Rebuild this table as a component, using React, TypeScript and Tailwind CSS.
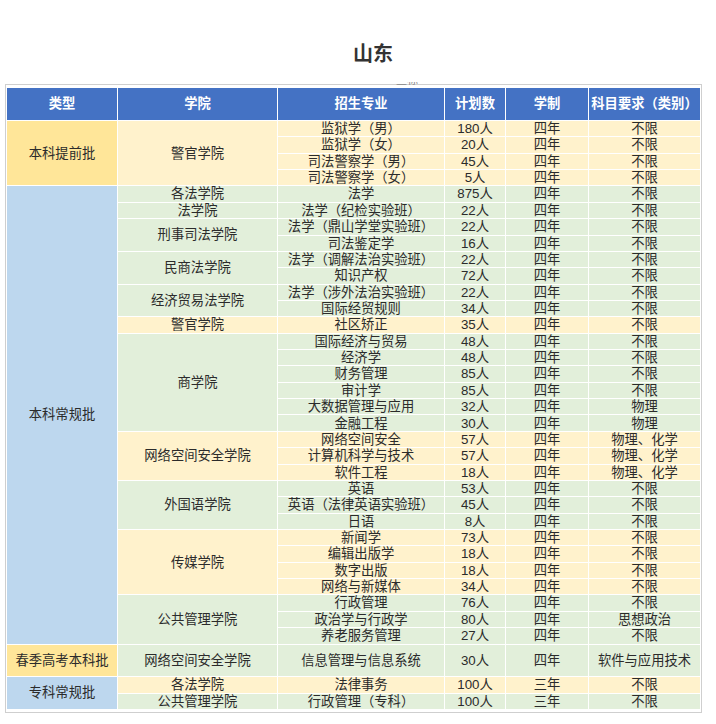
type Span = [string, number, string];

interface Row {
  type?: Span;
  college?: Span;
  major: string;
  plan: string;
  years?: string;
  subject?: string;
  bg: string;
  tall?: boolean;
}

const GOLD = "bg-[#FFE699]";
const YEL = "bg-[#FFF2CC]";
const BLUE = "bg-[#BDD7EE]";
const GRN = "bg-[#E2EFDA]";

const rows: Row[] = [
  { type: ["本科提前批", 4, GOLD], college: ["警官学院", 4, YEL], major: "监狱学（男）", plan: "180人", bg: YEL },
  { major: "监狱学（女）", plan: "20人", bg: YEL },
  { major: "司法警察学（男）", plan: "45人", bg: YEL },
  { major: "司法警察学（女）", plan: "5人", bg: YEL },

  { type: ["本科常规批", 28, BLUE], college: ["各法学院", 1, GRN], major: "法学", plan: "875人", bg: GRN },
  { college: ["法学院", 1, GRN], major: "法学（纪检实验班）", plan: "22人", bg: GRN },
  { college: ["刑事司法学院", 2, GRN], major: "法学（鼎山学堂实验班）", plan: "22人", bg: GRN },
  { major: "司法鉴定学", plan: "16人", bg: GRN },
  { college: ["民商法学院", 2, GRN], major: "法学（调解法治实验班）", plan: "22人", bg: GRN },
  { major: "知识产权", plan: "72人", bg: GRN },
  { college: ["经济贸易法学院", 2, GRN], major: "法学（涉外法治实验班）", plan: "22人", bg: GRN },
  { major: "国际经贸规则", plan: "34人", bg: GRN },
  { college: ["警官学院", 1, YEL], major: "社区矫正", plan: "35人", bg: YEL },
  { college: ["商学院", 6, GRN], major: "国际经济与贸易", plan: "48人", bg: GRN },
  { major: "经济学", plan: "48人", bg: GRN },
  { major: "财务管理", plan: "85人", bg: GRN },
  { major: "审计学", plan: "85人", bg: GRN },
  { major: "大数据管理与应用", plan: "32人", subject: "物理", bg: GRN },
  { major: "金融工程", plan: "30人", subject: "物理", bg: GRN },
  { college: ["网络空间安全学院", 3, YEL], major: "网络空间安全", plan: "57人", subject: "物理、化学", bg: YEL },
  { major: "计算机科学与技术", plan: "57人", subject: "物理、化学", bg: YEL },
  { major: "软件工程", plan: "18人", subject: "物理、化学", bg: YEL },
  { college: ["外国语学院", 3, GRN], major: "英语", plan: "53人", bg: GRN },
  { major: "英语（法律英语实验班）", plan: "45人", bg: GRN },
  { major: "日语", plan: "8人", bg: GRN },
  { college: ["传媒学院", 4, YEL], major: "新闻学", plan: "73人", bg: YEL },
  { major: "编辑出版学", plan: "18人", bg: YEL },
  { major: "数字出版", plan: "18人", bg: YEL },
  { major: "网络与新媒体", plan: "34人", bg: YEL },
  { college: ["公共管理学院", 3, GRN], major: "行政管理", plan: "76人", bg: GRN },
  { major: "政治学与行政学", plan: "80人", subject: "思想政治", bg: GRN },
  { major: "养老服务管理", plan: "27人", bg: GRN },

  {
    type: ["春季高考本科批", 1, GOLD],
    college: ["网络空间安全学院", 1, GRN],
    major: "信息管理与信息系统",
    plan: "30人",
    subject: "软件与应用技术",
    bg: GRN,
    tall: true,
  },

  { type: ["专科常规批", 2, BLUE], college: ["各法学院", 1, YEL], major: "法律事务", plan: "100人", years: "三年", bg: YEL },
  { college: ["公共管理学院", 1, GRN], major: "行政管理（专科）", plan: "100人", years: "三年", bg: GRN },
];

const headers = ["类型", "学院", "招生专业", "计划数", "学制", "科目要求（类别）"];
const cell = "p-0 text-center align-middle leading-none whitespace-nowrap";

export default function App() {
  return (
    <div
      className="min-h-[724px] w-[716px] bg-white text-[#2b2b2b]"
      style={{ fontFamily: '"Liberation Sans", "Noto Sans CJK SC", sans-serif' }}
    >
      <div className="pl-[30px] pt-[40px] text-center text-[20px] font-bold leading-[28px] text-[#333]">
        山东
      </div>

      <div className="relative ml-[5px] mt-[16px] w-[697px] border border-[#cfcfcf]">
        <div className="absolute left-[390px] top-[-3px] h-[4px] overflow-hidden text-[11px] leading-none text-[#888]">
          <div className="-mt-[7px]">些标</div>
        </div>
        <table className="w-[695px] table-fixed border-separate border-spacing-px bg-white text-[13.3px]">
          <colgroup>
            <col className="w-[110px]" />
            <col className="w-[159px]" />
            <col className="w-[166px]" />
            <col className="w-[60px]" />
            <col className="w-[82px]" />
            <col className="w-[111px]" />
          </colgroup>
          <tbody>
            <tr className="h-px">
              {headers.map((h) => (
                <td key={h} className="h-px p-0" />
              ))}
            </tr>
            <tr className="h-[32px]">
              {headers.map((h) => (
                <td key={h} className={`${cell} bg-[#4472C4] font-bold text-white`}>
                  {h}
                </td>
              ))}
            </tr>
            {rows.map((r, i) => (
              <tr key={i} className={r.tall ? "h-[31.72px]" : "h-[15.36px]"}>
                {r.type && (
                  <td rowSpan={r.type[1]} className={`${cell} ${r.type[2]}`}>
                    {r.type[0]}
                  </td>
                )}
                {r.college && (
                  <td rowSpan={r.college[1]} className={`${cell} ${r.college[2]}`}>
                    {r.college[0]}
                  </td>
                )}
                <td className={`${cell} ${r.bg}`}>{r.major}</td>
                <td className={`${cell} ${r.bg}`}>{r.plan}</td>
                <td className={`${cell} ${r.bg}`}>{r.years ?? "四年"}</td>
                <td className={`${cell} ${r.bg}`}>{r.subject ?? "不限"}</td>
              </tr>
            ))}
            <tr className="h-px">
              {headers.map((h) => (
                <td key={h} className="h-px p-0" />
              ))}
            </tr>
          </tbody>
        </table>
      </div>
    </div>
  );
}
